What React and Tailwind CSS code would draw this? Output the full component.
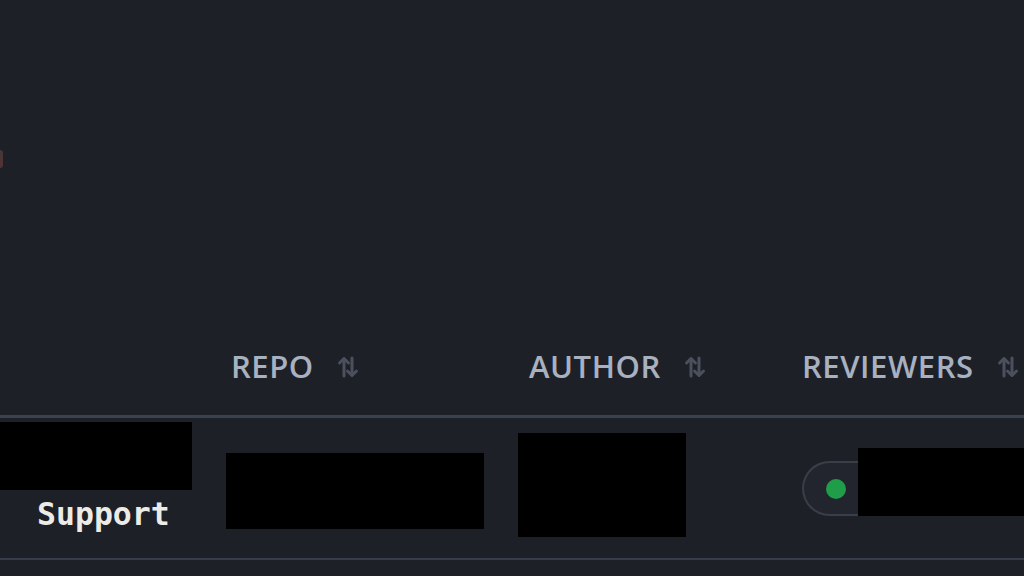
import React from "react";

const SortIcon = () => (
  <svg width="22" height="24" viewBox="0 0 22 24" fill="none" stroke="#4a505c" strokeWidth="3" strokeLinecap="round" strokeLinejoin="round">
    <path d="M7 21V4" />
    <path d="M2.5 8 7 3.5 11.5 8" />
    <path d="M15 3v17" />
    <path d="M10.5 16l4.5 4.5 4.5-4.5" />
  </svg>
);

const HeaderCell = ({ label, pad }) => (
  <div className={`flex items-center gap-[23px] ${pad}`}>
    <span className="text-[31px] font-semibold tracking-[0.55px] text-[#a7b1c0] leading-none" style={{ fontFamily: '"Open Sans", "Noto Sans", sans-serif' }}>
      {label}
    </span>
    <SortIcon />
  </div>
);

export default function App() {
  return (
    <div className="w-[1024px] h-[576px] overflow-hidden bg-[#1e2028] flex flex-col">
      <div className="h-[336px] shrink-0 pt-[150px]">
        <div className="w-[3px] h-[18px] rounded-r-full bg-gradient-to-b from-[#5a4a3a] to-[#7a3a44] opacity-60" />
      </div>

      <div className="grid grid-cols-[210px_290px_286px_1fr] h-[82px] pb-[18px] items-center border-b-[3px] border-[#3a4150] shrink-0">
        <div />
        <HeaderCell label="REPO" pad="pl-[21px]" />
        <HeaderCell label="AUTHOR" pad="pl-[29px]" />
        <HeaderCell label="REVIEWERS" pad="pl-[16px]" />
      </div>

      <div className="grid grid-cols-[210px_290px_286px_1fr] h-[142px] border-b-[2px] border-[#363c48] shrink-0">
        <div className="flex flex-col pt-[4px]">
          <div className="w-[192px] h-[68px] bg-black" />
          <span className="pl-[37px] mt-[4px] text-[31.5px] font-bold text-[#ecebe6] leading-[40px]" style={{ fontFamily: '"DejaVu Sans Mono", monospace' }}>
            Support
          </span>
        </div>
        <div className="pl-[16px] pt-[35px]">
          <div className="w-[258px] h-[76px] bg-black" />
        </div>
        <div className="pl-[18px] pt-[15px]">
          <div className="w-[168px] h-[104px] bg-black" />
        </div>
        <div className="pl-[16px] pt-[30px] flex items-end h-[98px]">
          <div className="w-[62px] h-[55px] rounded-l-full border-2 border-r-0 border-[#393e48] bg-[#22252d] flex items-center pl-[22px] shrink-0">
            <div className="w-[20px] h-[20px] rounded-full bg-[#1f9d48]" />
          </div>
          <div className="ml-[-6px] w-[170px] h-[68px] bg-black shrink-0" />
        </div>
      </div>
    </div>
  );
}
